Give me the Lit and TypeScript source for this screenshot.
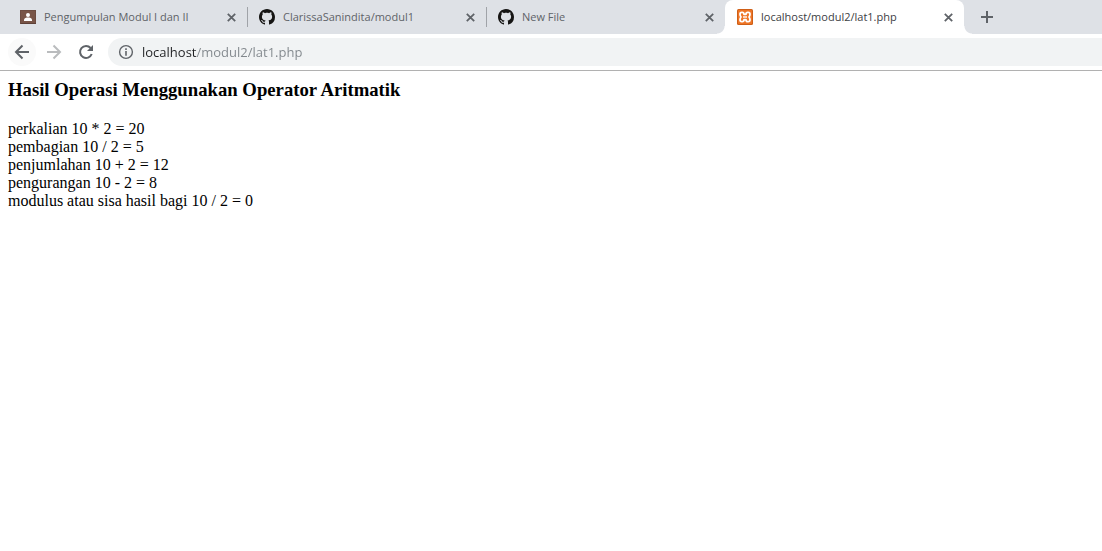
import { LitElement, html, css, svg } from "lit";
import { customElement, property, state } from "lit/decorators.js";
import { classMap } from "lit/directives/class-map.js";

const closeIcon = svg`<path d="M.8.8l7.400 7.400M8.200.8L.8 8.200" fill="none" stroke="#5f6368" stroke-width="1.8"/>`;

const icons = {
  classroom: html`<svg width="16" height="16" viewBox="0 0 16 16" aria-hidden="true">
    <rect y="1" width="16" height="14" fill="#6d4c41"/>
    <rect x="1" y="2" width="14" height="12" fill="#795548"/>
    <rect x="1" y="14" width="15" height="1" fill="#5d4037"/>
    <circle cx="8" cy="5.9" r="2" fill="#fff"/>
    <path d="M4 12v-1.2C4 9.2 6.3 8.6 8 8.6s4 .6 4 2.2V12z" fill="#fff"/>
  </svg>`,
  github: html`<svg width="16" height="16" viewBox="0 0 16 16" aria-hidden="true">
    <path fill="#161514" d="M8 0C3.58 0 0 3.58 0 8c0 3.54 2.29 6.53 5.47 7.59.4.07.55-.17.55-.38 0-.19-.01-.82-.01-1.49-2.01.37-2.53-.49-2.69-.94-.09-.23-.48-.94-.82-1.13-.28-.15-.68-.52-.01-.53.63-.01 1.08.58 1.23.82.72 1.21 1.87.87 2.33.66.07-.52.28-.87.51-1.07-1.78-.2-3.64-.89-3.64-3.95 0-.87.31-1.59.82-2.15-.08-.2-.36-1.02.08-2.12 0 0 .67-.21 2.2.82.64-.18 1.32-.27 2-.27s1.36.09 2 .27c1.53-1.04 2.2-.82 2.2-.82.44 1.1.16 1.92.08 2.12.51.56.82 1.27.82 2.15 0 3.07-1.87 3.75-3.65 3.95.29.25.54.73.54 1.48 0 1.07-.01 1.93-.01 2.2 0 .21.15.46.55.38A8.01 8.01 0 0 0 16 8c0-4.42-3.58-8-8-8z"/>
  </svg>`,
  xampp: html`<svg width="16" height="16" viewBox="0 0 16 16" aria-hidden="true">
    <rect width="16" height="16" rx="1.5" fill="#cf5f17"/>
    <rect x="1" y="1" width="14" height="14" rx="1" fill="#ee7526"/>
    <path d="M7 5.300C7 3.900 6.300 3.400 5.300 3.400H4.700C3.500 3.400 3 4.200 3 5.200C3 6.600 3.300 7.200 4 8C3.300 8.800 3 9.400 3 10.800C3 11.800 3.500 12.600 4.700 12.600H5.300C6.300 12.600 7 12.100 7 10.700H9C9 12.100 9.700 12.600 10.700 12.600H11.300C12.500 12.600 13 11.800 13 10.800C13 9.400 12.700 8.800 12 8C12.700 7.200 13 6.600 13 5.200C13 4.200 12.500 3.400 11.300 3.400H10.700C9.700 3.400 9 3.900 9 5.300Z" fill="none" stroke="#fff" stroke-width="1.800" stroke-linejoin="round"/>
    <path d="M6 8h4" stroke="#fff" stroke-width="1.400"/>
  </svg>`,
};

type IconName = keyof typeof icons;

interface Tab {
  title: string;
  icon: IconName;
}

@customElement("browser-tab")
class BrowserTab extends LitElement {
  @property() label = "";
  @property() icon: IconName = "github";
  @property({ type: Boolean, reflect: true }) active = false;
  @property({ type: Boolean }) divider = false;

  static styles = css`
    :host {
      display: block;
      flex: 1 1 0;
      min-width: 0;
    }
    .tab {
      position: relative;
      display: flex;
      align-items: center;
      box-sizing: border-box;
      height: 34px;
      padding: 0 7px 0 12px;
      color: #5f6368;
    }
    .divider::after {
      content: "";
      position: absolute;
      right: -1px;
      top: 7px;
      width: 1px;
      height: 20px;
      background: #a0a3a8;
    }
    .active {
      background: #fff;
      color: #3c4043;
      border-radius: 8px 8px 0 0;
    }
    .active::before,
    .active::after {
      content: "";
      position: absolute;
      bottom: 0;
      width: 8px;
      height: 8px;
    }
    .active::before {
      right: 100%;
      background: radial-gradient(circle at 0 0, transparent 7px, #fff 8px);
    }
    .active::after {
      left: 100%;
      background: radial-gradient(circle at 100% 0, transparent 7px, #fff 8px);
    }
    .select {
      display: flex;
      align-items: center;
      gap: 8px;
      flex: 1;
      min-width: 0;
      height: 34px;
      padding: 0;
      border: 0;
      background: none;
      color: inherit;
      font: 11px/16px "Open Sans", "Noto Sans", sans-serif;
      text-align: left;
    }
    .select svg {
      flex: none;
    }
    .title {
      overflow: hidden;
      white-space: nowrap;
    }
    .close {
      display: grid;
      place-items: center;
      flex: none;
      width: 17px;
      height: 17px;
      padding: 0;
      border: 0;
      border-radius: 50%;
      background: none;
    }
  `;

  render() {
    return html`<div class=${classMap({ tab: true, active: this.active, divider: this.divider })}>
      <button class="select" role="tab" aria-selected=${this.active ? "true" : "false"}>
        ${icons[this.icon]}<span class="title">${this.label}</span>
      </button>
      <button class="close" aria-label="Close tab">
        <svg width="9" height="9" viewBox="0 0 9 9" aria-hidden="true">${closeIcon}</svg>
      </button>
    </div>`;
  }
}

@customElement("app-root")
class AppRoot extends LitElement {
  @state() private current = 3;

  private tabs: Tab[] = [
    { title: "Pengumpulan Modul I dan II", icon: "classroom" },
    { title: "ClarissaSanindita/modul1", icon: "github" },
    { title: "New File", icon: "github" },
    { title: "localhost/modul2/lat1.php", icon: "xampp" },
  ];

  private results = [
    "perkalian 10 * 2 = 20",
    "pembagian 10 / 2 = 5",
    "penjumlahan 10 + 2 = 12",
    "pengurangan 10 - 2 = 8",
    "modulus atau sisa hasil bagi 10 / 2 = 0",
  ];

  static styles = css`
    :host {
      display: flex;
      flex-direction: column;
      min-height: 100vh;
      background: #fff;
      overflow: hidden;
    }
    .strip {
      display: flex;
      align-items: center;
      height: 34px;
      padding-left: 8px;
      background: #dee1e6;
    }
    .tabs {
      display: flex;
      flex: 0 1 956px;
      min-width: 0;
    }
    .icon-button {
      display: grid;
      place-items: center;
      flex: none;
      width: 28px;
      height: 28px;
      padding: 0;
      border: 0;
      border-radius: 50%;
      background: none;
    }
    .new-tab {
      margin-left: 9px;
    }
    .hover {
      background: #fafafa;
    }
    .toolbar {
      display: flex;
      align-items: center;
      gap: 4px;
      padding: 4px 0 4px 8px;
      border-bottom: 1px solid #b1b1b1;
    }
    .omnibox {
      display: flex;
      align-items: center;
      gap: 8px;
      flex: 1;
      height: 28px;
      margin-left: 4px;
      padding-left: 10px;
      border-radius: 14px 0 0 14px;
      background: #f1f3f4;
    }
    .info {
      display: grid;
      place-items: center;
      width: 16px;
      height: 16px;
      padding: 0;
      border: 0;
      background: none;
    }
    .url {
      flex: 1;
      min-width: 0;
      height: 20px;
      padding: 0;
      border: 0;
      outline: 0;
      font: 13px/20px "Open Sans", "Noto Sans", sans-serif;
      color: transparent;
      caret-color: #202124;
      background: linear-gradient(90deg, #202124 55px, #80868b 55px);
      -webkit-background-clip: text;
      background-clip: text;
    }
    .page {
      padding: 8px;
      color: #000;
      font: 16px/18px "Liberation Serif", "Times New Roman", serif;
    }
    h3 {
      margin: 0 0 19px;
      line-height: 22px;
    }
    p {
      margin: 0;
    }
  `;

  render() {
    return html`
      <header>
        <div class="strip">
          <div class="tabs" role="tablist">
            ${this.tabs.map(
              (tab, i) => html`<browser-tab
                .label=${tab.title}
                .icon=${tab.icon}
                ?active=${i === this.current}
                .divider=${i < this.current - 1}
              ></browser-tab>`,
            )}
          </div>
          <button class="icon-button new-tab" aria-label="New tab">
            <svg width="12" height="12" viewBox="0 0 12 12" aria-hidden="true">
              <path d="M6 0v12M0 6h12" stroke="#5f6368" stroke-width="2"/>
            </svg>
          </button>
        </div>
        <nav class="toolbar">
          <button class="icon-button hover" aria-label="Back">
            <svg width="16" height="16" viewBox="0 0 16 16" aria-hidden="true">
              <path d="M15 8H2.200M8.500 1.500L2 8l6.500 6.500" fill="none" stroke="#5f6368" stroke-width="2"/>
            </svg>
          </button>
          <button class="icon-button" aria-label="Forward">
            <svg width="16" height="16" viewBox="0 0 16 16" aria-hidden="true">
              <path d="M1 8h12.800M7.500 1.500L14 8l-6.500 6.500" fill="none" stroke="#babcbe" stroke-width="2"/>
            </svg>
          </button>
          <button class="icon-button" aria-label="Reload">
            <svg width="16" height="16" viewBox="0 0 16 16" aria-hidden="true">
              <path d="M12.600 4A6 6 0 1 0 13.700 10" fill="none" stroke="#5f6368" stroke-width="2"/>
              <path d="M15 1v6H9z" fill="#5f6368"/>
            </svg>
          </button>
          <div class="omnibox">
            <button class="info" aria-label="View site information">
              <svg width="16" height="16" viewBox="0 0 16 16" aria-hidden="true">
                <circle cx="8" cy="8" r="6.400" fill="none" stroke="#5f6368" stroke-width="1.400"/>
                <path d="M8 4.300v1.600M8 7v4.700" stroke="#5f6368" stroke-width="1.600"/>
              </svg>
            </button>
            <input class="url" type="text" aria-label="Address" spellcheck="false" value="localhost/modul2/lat1.php" />
          </div>
        </nav>
      </header>
      <main class="page">
        <h3>Hasil Operasi Menggunakan Operator Aritmatik</h3>
        ${this.results.map((line) => html`<p>${line}</p>`)}
      </main>
    `;
  }
}
